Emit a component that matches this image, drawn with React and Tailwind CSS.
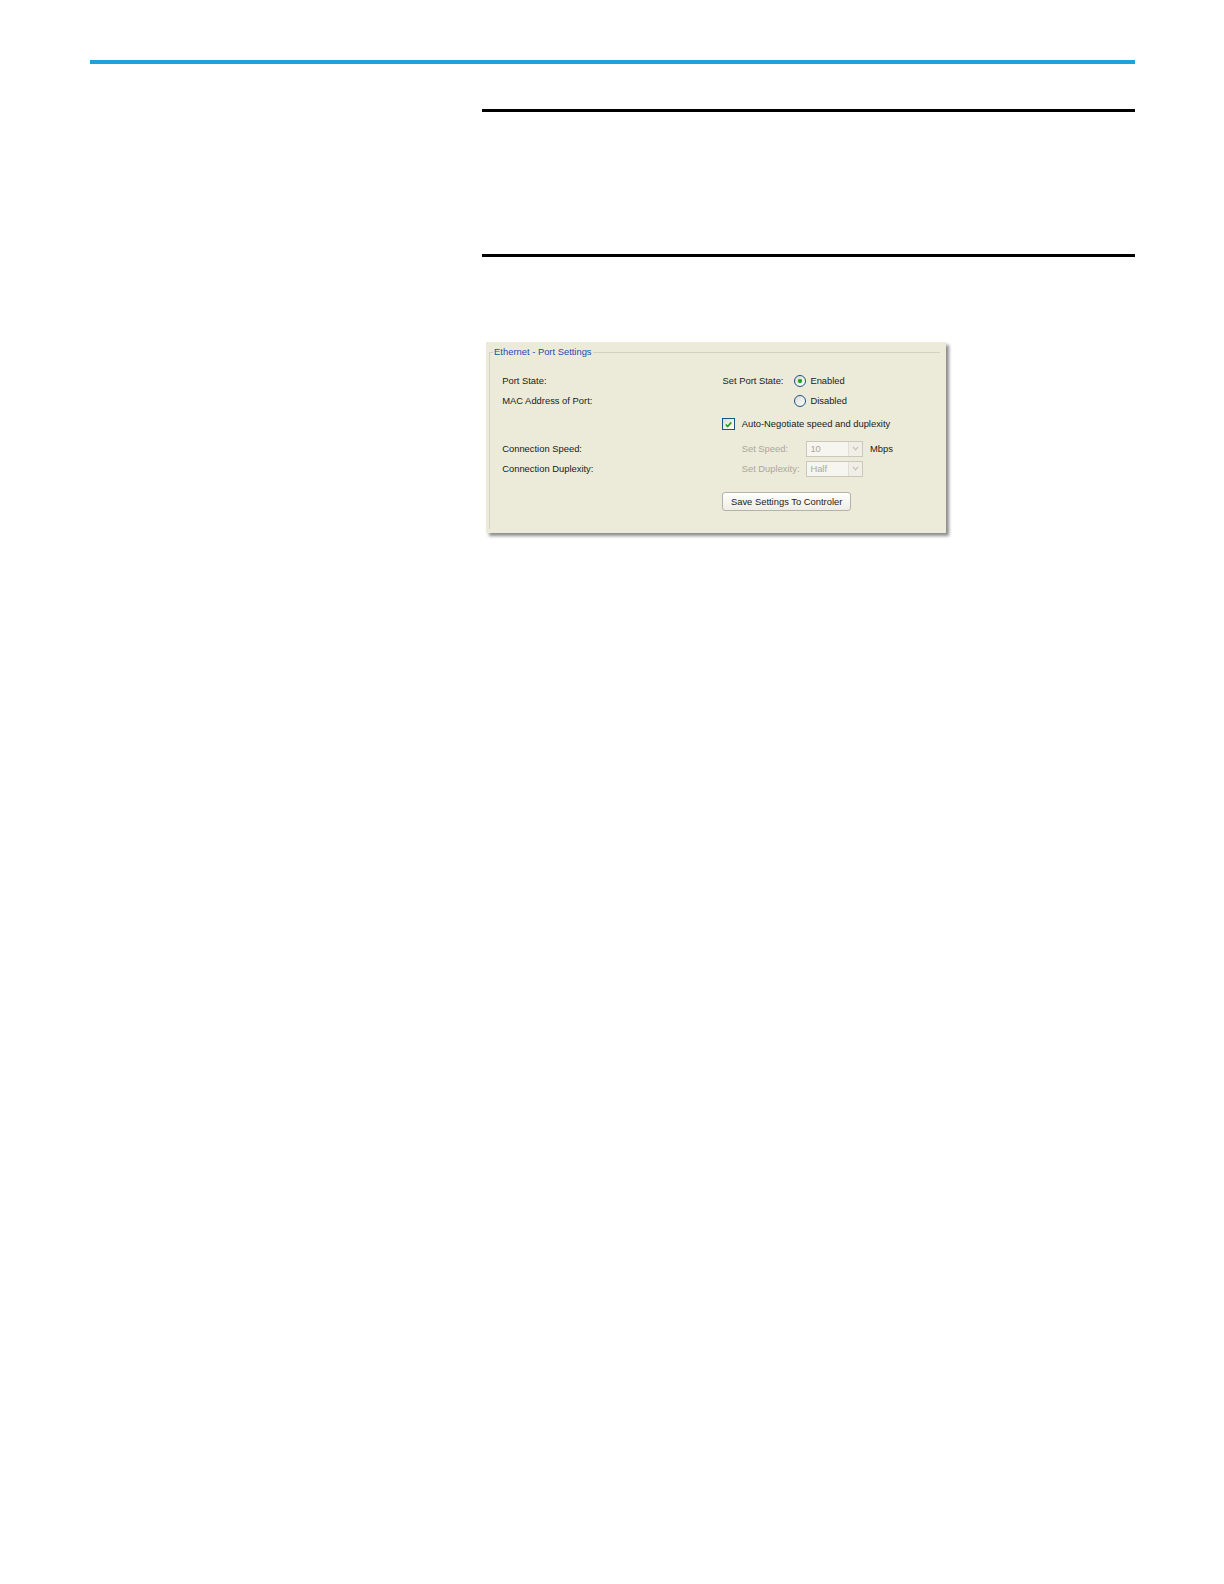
const font = { fontFamily: '"Liberation Sans", Arial, sans-serif' };

const Radio = ({ checked }) => (
  <span className="relative inline-flex h-[12px] w-[12px] items-center justify-center rounded-full border border-[#1d5281] bg-gradient-to-br from-[#dcdcd5] to-white">
    {checked && <span className="h-[4px] w-[4px] rounded-full bg-[#21a121] shadow-[0_0_1px_#4cc24c]"></span>}
  </span>
);

const Checkbox = () => (
  <span className="inline-flex h-[12px] w-[12px] items-center justify-center border border-[#1d5281] bg-gradient-to-br from-[#dcdcd5] to-white">
    <svg viewBox="0 0 10 10" className="h-[9px] w-[9px]">
      <path d="M2 5 L4 7.2 L8 2.6" fill="none" stroke="#21a121" strokeWidth="1.8" />
    </svg>
  </span>
);

const Combo = ({ value }) => (
  <div className="flex h-[16px] w-[56px] items-stretch border border-[#cbc8bb] bg-[#f6f5f0]">
    <span className="flex-1 pl-[3px] leading-[14px] text-[#aca899]">{value}</span>
    <span className="flex w-[14px] items-center justify-center border-l border-[#e1dfd4] bg-[#efeee7]">
      <svg viewBox="0 0 8 6" className="h-[5px] w-[7px]">
        <path d="M1 1 L4 4.5 L7 1" fill="none" stroke="#c4c2b8" strokeWidth="1.4" />
      </svg>
    </span>
  </div>
);

const Row = ({ left, children, className = "" }) => (
  <div className={"flex h-[20px] items-center " + className}>
    <div className="w-[218px] shrink-0 text-[#1a1a1a]">{left}</div>
    <div className="flex flex-1 items-center">{children}</div>
  </div>
);

const PortSettings = () => (
  <div className="relative h-[189px] w-[455px] bg-[#ecead9] shadow-[3px_3px_3px_rgba(0,0,0,0.45)] text-[9.3px]" style={font}>
    {/* group box frame */}
    <div className="absolute left-[3px] right-[6px] top-[10px] bottom-[3px] border-l border-t border-[#d3d1c2]"></div>
    <div className="relative flex h-[20px] items-center pl-[7px] pt-[1px]">
      <span className="bg-[#ecead9] px-[1px] text-[#1b4cb4]">Ethernet - Port Settings</span>
    </div>

    <div className="relative pl-[16px]">
      <Row left="Port State:" className="mt-[9px]">
        <span className="w-[71px] text-[#1a1a1a]">Set Port State:</span>
        <Radio checked />
        <span className="ml-[4px] text-[#1a1a1a]">Enabled</span>
      </Row>
      <Row left="MAC Address of Port:">
        <span className="w-[71px]"></span>
        <Radio />
        <span className="ml-[4px] text-[#1a1a1a]">Disabled</span>
      </Row>
      <Row left="" className="mt-[3px]">
        <Checkbox />
        <span className="ml-[7px] text-[#1a1a1a]">Auto-Negotiate speed and duplexity</span>
      </Row>
      <Row left="Connection Speed:" className="mt-[4px]">
        <span className="ml-[19px] w-[64px] text-[#aca899]">Set Speed:</span>
        <Combo value="10" />
        <span className="ml-[7px] text-[#1a1a1a]">Mbps</span>
      </Row>
      <Row left="Connection Duplexity:">
        <span className="ml-[19px] w-[64px] text-[#aca899]">Set Duplexity:</span>
        <Combo value="Half" />
      </Row>
      <div className="mt-[13px] flex">
        <div className="w-[218px] shrink-0"></div>
        <button className="h-[19px] w-[127px] rounded-[3px] border border-[#b5b3a8] bg-gradient-to-b from-white to-[#eeede6] text-[#1a1a1a]">
          Save Settings To Controler
        </button>
      </div>
    </div>
  </div>
);

export default function App() {
  return (
    <div className="bg-white pb-[100px] [zoom:1.0105]">
      <div className="h-[59px]"></div>
      <div className="ml-[89px] h-[4px] w-[1034px] bg-[#1ba3dc]"></div>

      <div className="ml-[477px] w-[646px]">
        <div className="mt-[45px] h-[3px] bg-black"></div>
        <div className="h-[140px]"></div>
        <div className="h-[3px] bg-black"></div>
      </div>

      <div className="ml-[481px] mt-[84px]">
        <PortSettings />
      </div>
    </div>
  );
}
